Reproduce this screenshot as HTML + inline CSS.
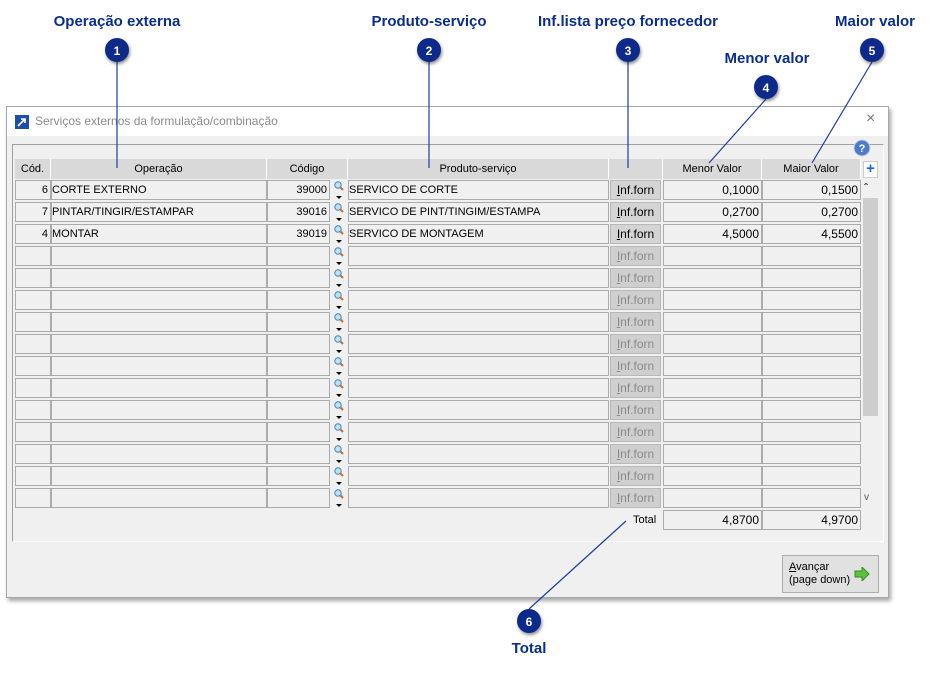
<!DOCTYPE html>
<html><head><meta charset="utf-8"><style>
*{box-sizing:border-box;margin:0;padding:0}
body{width:931px;height:675px;background:#fff;position:relative;overflow:hidden;font-family:"Liberation Sans",sans-serif;font-size:11px;color:#000}
.a{position:absolute}
.lbl{position:absolute;font-weight:bold;font-size:15px;color:#0a2e8c;white-space:nowrap;transform:translateX(-50%)}
.dlg{left:6px;top:106px;width:883px;height:492px;background:#f0f0f0;border:1px solid #a8a8a8;box-shadow:2px 3px 4px rgba(0,0,0,.35)}
.title{left:0;top:0;width:881px;height:29px;background:#fff}
.c{position:absolute;height:20px;border:1px solid #ababab;background:#f0f0f0;line-height:18px;padding:0 2px;white-space:nowrap;overflow:hidden}
.h{position:absolute;top:159px;height:20px;background:#d9d9d9;border-right:1px solid #fff;text-align:center;line-height:20px}
.r{text-align:right}
.btn{position:absolute;height:20px;background:#d4d4d4;border:1px solid #b8b8b8;text-align:center;line-height:18px;color:#000;font-size:12px}
.btn.dis{color:#8a8a8a;background:#cfcfcf}
.ic{position:absolute;width:18px;height:22px}
</style></head><body>
<div class="lbl" style="left:117px;top:13px">Operação externa</div>
<div class="lbl" style="left:429px;top:13px">Produto-serviço</div>
<div class="lbl" style="left:628px;top:13px">Inf.lista preço fornecedor</div>
<div class="lbl" style="left:767px;top:50px">Menor valor</div>
<div class="lbl" style="left:875px;top:13px">Maior valor</div>
<div class="lbl" style="left:529px;top:640px">Total</div>

<div class="a dlg">
 <div class="a title"></div>
 <svg class="a" style="left:8px;top:8px" width="14" height="14"><rect width="14" height="14" fill="#1d4fa8"/><path d="M3 11 L10 4 M6 4 H10 V8" stroke="#fff" stroke-width="1.6" fill="none"/></svg>
 <div class="a" style="left:28px;top:7px;font-size:12px;color:#8a8a8a">Serviços externos da formulação/combinação</div>
 <div class="a" style="left:859px;top:3px;font-size:16px;color:#777">×</div>
 <div class="a" style="left:5px;top:37px;width:872px;height:398px;border:1px solid #a0a0a0;border-right-color:#fff;border-bottom-color:#fff"></div>
 <svg class="a" style="left:846px;top:32px" width="18" height="18"><circle cx="9" cy="9" r="8" fill="#4a7cc9" stroke="#c8d4e8"/><text x="9" y="13" font-size="11" font-weight="bold" fill="#fff" text-anchor="middle" font-family="Liberation Sans">?</text></svg>
 <div class="a" style="left:775px;top:448px;width:97px;height:38px;border:1px solid #adadad;background:#e1e1e1;font-size:11px;line-height:13px;padding:5px 0 0 6px"><u>A</u>vançar<br>(page down)</div>
 <svg class="a" style="left:847px;top:460px" width="16" height="14"><path d="M1 4 H8 V0 L15 7 L8 14 V10 H1Z" fill="#5cc43a" stroke="#3a8a22" stroke-width="1"/></svg>
</div>

<!-- headers -->
<div class="h" style="left:15px;width:36px">Cód.</div>
<div class="h" style="left:51px;width:216px">Operação</div>
<div class="h" style="left:267px;width:81px">Código</div>
<div class="h" style="left:348px;width:261px">Produto-serviço</div>
<div class="h" style="left:609px;width:54px"></div>
<div class="h" style="left:663px;width:99px">Menor Valor</div>
<div class="h" style="left:762px;width:99px">Maior Valor</div>
<div class="a" style="left:863px;top:161px;width:15px;height:17px;background:#fff;border:1px solid #ccc;color:#1a6ad6;font-weight:bold;font-size:15px;line-height:14px;text-align:center">+</div>
<div class="a" style="left:862px;top:180px;width:17px;height:328px;background:#f0f0f0"></div>
<div class="a" style="left:863px;top:198px;width:15px;height:218px;background:#cdcdcd"></div>
<div class="a" style="left:864px;top:181px;font-size:12px">ˆ</div>
<div class="a" style="left:864px;top:492px;font-size:10px;color:#555">v</div>

<div id="rows"></div>
<script>
var d=[["6","CORTE EXTERNO","39000","SERVICO DE CORTE","0,1000","0,1500"],["7","PINTAR/TINGIR/ESTAMPAR","39016","SERVICO DE PINT/TINGIM/ESTAMPA","0,2700","0,2700"],["4","MONTAR","39019","SERVICO DE MONTAGEM","4,5000","4,5500"]];
var h="";
for(var i=0;i<15;i++){var y=180+i*22,r=d[i]||["","","","","",""];
h+='<div class="c r" style="left:15px;top:'+y+'px;width:36px">'+r[0]+'</div>';
h+='<div class="c" style="left:51px;top:'+y+'px;width:216px;padding:0">'+r[1]+'</div>';
h+='<div class="c r" style="left:267px;top:'+y+'px;width:63px">'+r[2]+'</div>';
h+='<svg class="ic" style="left:331px;top:'+y+'px"><circle cx="7" cy="5" r="3.2" fill="#bfe0f5" stroke="#4a86b8"/><path d="M9.5 7.5 L12 10" stroke="#c07030" stroke-width="2"/><path d="M5 16 H11 L8 19Z" fill="#000"/></svg>';
h+='<div class="c" style="left:348px;top:'+y+'px;width:261px;padding:0">'+r[3]+'</div>';
h+='<div class="btn'+(i<3?'':' dis')+'" style="left:610px;top:'+y+'px;width:51px"><u>I</u>nf.forn</div>';
h+='<div class="c r" style="left:663px;top:'+y+'px;width:99px;font-size:12px">'+r[4]+'</div>';
h+='<div class="c r" style="left:762px;top:'+y+'px;width:99px;font-size:12px">'+r[5]+'</div>';}
h+='<div class="a" style="left:633px;top:514px;font-size:11px">Total</div>';
h+='<div class="c r" style="left:663px;top:510px;width:99px;font-size:12px">4,8700</div>';
h+='<div class="c r" style="left:762px;top:510px;width:99px;font-size:12px">4,9700</div>';
document.getElementById("rows").innerHTML=h;
</script>

<svg class="a" style="left:0;top:0" width="931" height="675">
<defs><filter id="s"><feDropShadow dx="1" dy="2" stdDeviation="1.5" flood-opacity=".45"/></filter></defs>
<g stroke="#1d3f9c" stroke-width="1.2" fill="none">
<path d="M117 62 V168"/><path d="M429 62 V168"/><path d="M628 62 V168"/>
<path d="M766 99 L709 163"/><path d="M872 62 L812 163"/><path d="M529 609 L626 521"/>
</g>
<g fill="#0a2a8a" filter="url(#s)">
<circle cx="117" cy="50" r="12"/><circle cx="429" cy="50" r="12"/><circle cx="628" cy="50" r="12"/>
<circle cx="766" cy="87" r="12"/><circle cx="872" cy="50" r="12"/><circle cx="529" cy="621" r="12"/>
</g>
<g fill="#fff" font-family="Liberation Sans" font-weight="bold" font-size="12" text-anchor="middle">
<text x="117" y="55">1</text><text x="429" y="55">2</text><text x="628" y="55">3</text>
<text x="766" y="92">4</text><text x="872" y="55">5</text><text x="529" y="626">6</text>
</g>
</svg>
</body></html>
